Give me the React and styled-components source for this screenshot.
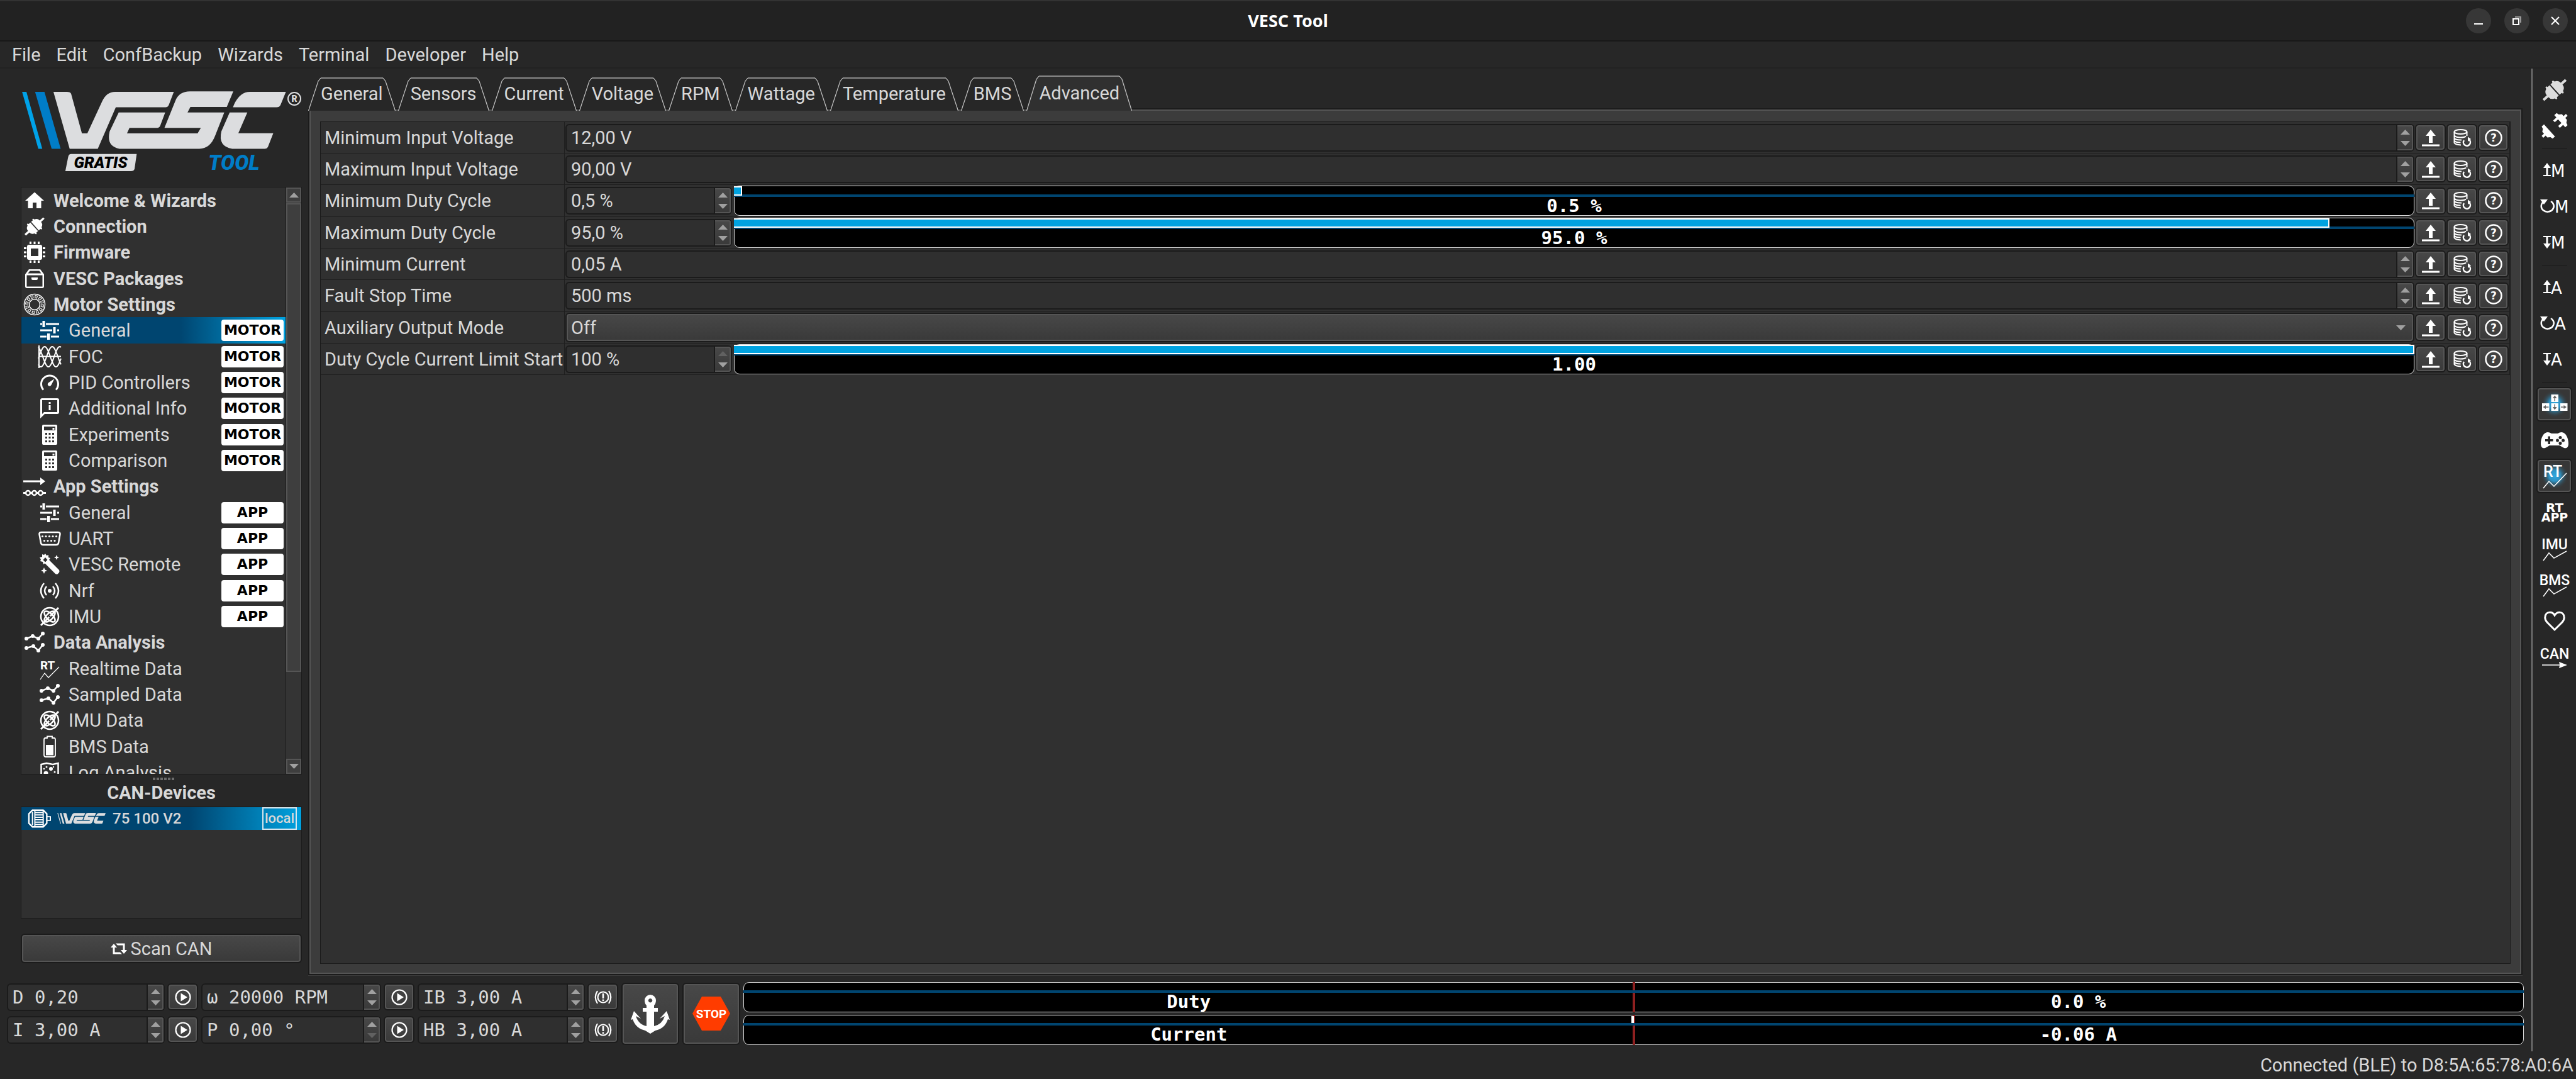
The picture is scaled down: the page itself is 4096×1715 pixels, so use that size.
import React from "react";
import styled, { createGlobalStyle, css } from "styled-components";
import { MdHome } from "react-icons/md";

const c = {
  window: "#272727",
  title: "#222222",
  base: "#303030",
  panel: "#3c3c3c",
  dark: "#1b1b1b",
  light: "#555555",
  text: "#d8d8d8",
  accent: "#00a2e0",
  accentDark: "#004570",
};

const sans = `Roboto, "Liberation Sans", sans-serif`;
const mono = `"DejaVu Sans Mono", "Liberation Mono", monospace`;
const wide = `"DejaVu Sans", "Liberation Sans", sans-serif`;

const Global = createGlobalStyle`
  *, *::before, *::after { box-sizing: border-box; }
  body { margin: 0; background: ${c.window}; overflow: hidden; }
  button, input, select { font: inherit; color: inherit; margin: 0; padding: 0; }
  svg { display: block; flex: none; overflow: visible; }
`;

/* ---------- frame ---------- */

const Window = styled.div`
  display: flex;
  flex-direction: column;
  height: 100vh;
  background: ${c.window};
  color: ${c.text};
  font: 400 29px/34px ${sans};
`;

const TitleBar = styled.header`
  display: grid;
  grid-template-columns: 1fr auto 1fr;
  align-items: center;
  height: 66px;
  flex: none;
  padding: 0 13px;
  background: ${c.title};
  border-top: 2px solid #333;
  border-bottom: 2px solid #181818;
`;

const Title = styled.h1`
  grid-column: 2;
  margin: 0;
  color: #fff;
  font: 700 27px/34px "Noto Sans", "Open Sans", sans-serif;
`;

const WindowButtons = styled.div`
  display: flex;
  justify-content: flex-end;
  gap: 21px;
`;

const RoundButton = styled.button`
  display: grid;
  place-items: center;
  width: 40px;
  height: 40px;
  border: 0;
  border-radius: 50%;
  background: #373737;
`;

const MenuBar = styled.nav`
  display: flex;
  align-items: center;
  height: 43px;
  flex: none;
  padding-left: 6px;
  border-bottom: 2px solid #222;
`;

const MenuButton = styled.button`
  border: 0;
  padding: 0 12px 0 13px;
  background: none;
`;

const Body = styled.div`
  display: flex;
  flex: 1;
  min-height: 0;
`;

const Work = styled.div`
  display: flex;
  flex-direction: column;
  flex: 1;
  min-width: 0;
`;

const Upper = styled.div`
  display: flex;
  flex: 1;
  min-height: 0;
`;

const StatusBar = styled.footer`
  display: flex;
  align-items: center;
  justify-content: flex-end;
  height: 44px;
  flex: none;
  padding-right: 4px;
`;

/* ---------- shared controls ---------- */

const raised = css`
  border: 2px solid ${c.dark};
  border-radius: 6px;
  background: linear-gradient(#484848, #393939);
  box-shadow: inset 0 0 0 2px ${c.light};
`;

const ToolButton = styled.button`
  ${raised}
  display: grid;
  place-items: center;
  flex: none;
  width: ${(p) => p.$w || 49}px;
  height: ${(p) => p.$h || 43}px;
  color: #fff;
`;

const FieldBox = styled.div`
  display: flex;
  flex: ${(p) => (p.$w ? "none" : 1)};
  width: ${(p) => (p.$w ? p.$w + "px" : "auto")};
  min-width: 0;
  height: 44px;
  border: 2px solid ${c.dark};
  border-radius: 6px;
  background: #2f2f2f;
  font-family: ${(p) => (p.$mono ? mono : "inherit")};
`;

const TextInput = styled.input`
  flex: 1;
  min-width: 0;
  padding: 0 7px;
  border: 0;
  background: none;
  outline: 0;
`;

const Spin = styled.div`
  display: flex;
  flex-direction: column;
  width: 27px;
  border-left: 2px solid ${c.dark};
  border-radius: 0 4px 4px 0;
  background: linear-gradient(#484848, #393939);
  box-shadow: inset -2px 0 ${c.light}, inset 0 2px ${c.light}, inset 0 -2px ${c.light};
`;

const SpinButton = styled.button`
  display: grid;
  place-items: ${(p) => (p.$up ? "end" : "start")} center;
  flex: 1;
  border: 0;
  padding: 5px 0;
  background: none;
  color: ${(p) => (p.$off ? "#616161" : "#a0a0a0")};
`;

const Up = () => (
  <svg width="15" height="8" viewBox="0 0 15 8"><path d="M0 8 7.500 0 15 8z" fill="currentColor" /></svg>
);
const Down = () => (
  <svg width="15" height="8" viewBox="0 0 15 8"><path d="M0 0 7.500 8 15 0z" fill="currentColor" /></svg>
);

function NumberField({ id, label, value, width, mono: isMono, offUp, offDown }) {
  return (
    <FieldBox $w={width} $mono={isMono}>
      <TextInput id={id} aria-label={label} defaultValue={value} />
      <Spin>
        <SpinButton $up $off={offUp} aria-label="Increase"><Up /></SpinButton>
        <SpinButton $off={offDown} aria-label="Decrease"><Down /></SpinButton>
      </Spin>
    </FieldBox>
  );
}

/* ---------- level bars ---------- */

const Bar = styled.div`
  position: relative;
  display: flex;
  flex: 1;
  height: 48px;
  padding-top: 15px;
  border: 1px solid #d8d8d8;
  border-radius: 9px;
  background: #000;
  color: #fff;
  font: 700 29px/32px ${mono};
  text-align: center;
`;

const BarLine = styled.span`
  position: absolute;
  inset: ${(p) => p.$top || 13}px -1px auto;
  height: 4px;
  background: ${c.accentDark};
`;

const BarFill = styled.span`
  position: absolute;
  top: 0;
  left: -1px;
  height: 15px;
  border: 2px solid #fff;
  border-left: 0;
  background: ${c.accent};
`;

const BarZero = styled.span`
  position: absolute;
  inset: -1px auto -1px 50%;
  width: 4px;
  margin-left: -2px;
  background: #8e2020;
`;

const BarTick = styled.span`
  position: absolute;
  inset: 1px 50% auto auto;
  width: 4px;
  height: 12px;
  background: #fff;
`;

const BarText = styled.span`
  position: relative;
  flex: 1;
`;

/* ---------- logo ---------- */

const white = "#dcdddf";

const LogoLetters = () => (
  <>
    <path d="M149 454H186Q196 454 198 464L228 660H243L284 502Q296 454 320 454H483L469 520Q466 531 460 531H322L272 736H194z" />
    <path d="M330 556H459L445 623Q442 633 434 633H360L353 660H549L558 633H457L487 500Q497 452 528 452H648L630 529H529L521 556H623L598 670Q584 736 554 736H332Q295 725 305 650z" />
    <path d="M694 454H794L779 520Q776 531 768 531H647L652 510Q668 454 694 454zM638 556H687L662 659H759L744 728Q742 736 736 736H645Q605 725 615 650z" />
  </>
);

const Logo = () => (
  <svg width="447" height="144" viewBox="0 0 447 144" role="img" aria-label="VESC Tool">
    <g transform="scale(.573 .321) translate(-60 -445)">
      <path fill="#00a2e8" d="M62 454H74L118 736H107z" />
      <path fill="#007dc8" d="M98 454H124L169 736H144z" />
      <g fill={white}><LogoLetters /></g>
      <path fill={white} d="M198 762H380L374 836Q372 847 364 847H182L190 775Q192 762 198 762z" />
    </g>
    <circle cx="434" cy="14" r="10" fill="none" stroke={white} strokeWidth="2" />
    <text x="434" y="19" textAnchor="middle" fill={white} fontFamily="Roboto" fontWeight="900" fontSize="14">R</text>
    <text x="126" y="124" textAnchor="middle" fill="#000" fontFamily="Roboto" fontWeight="900" fontStyle="italic" fontSize="25">GRATIS</text>
    <text x="338" y="127" textAnchor="middle" fill="#007dc8" fontFamily="Roboto" fontWeight="900" fontStyle="italic" fontSize="33">TOOL</text>
  </svg>
);

const LogoSmall = () => (
  <svg width="78" height="18" viewBox="0 0 78 18" aria-label="VESC">
    <g transform="scale(.105 .06) translate(-60 -450)" fill={white}>
      <path d="M62 454H74L118 736H107zM98 454H124L169 736H144z" />
      <LogoLetters />
    </g>
  </svg>
);

/* ---------- icons ---------- */

const Svg = ({ s = 36, w, h, vb, children }) => (
  <svg width={w || s} height={h || s} viewBox={vb || "0 0 36 36"} fill="#fff" stroke="none">{children}</svg>
);
const L = (p) => <path fill="none" stroke="#fff" strokeWidth="2.500" {...p} />;

const Home = () => <MdHome size={36} color="#fff" />;

const PlugShape = ({ fill = "#fff" }) => (
  <g transform="rotate(-42 18 18)" fill={fill}>
    <path d="M-6 16H3Q3 10 9 8L10 5H12L13 7H17V29H13L12 31H10L9 28Q3 26 3 20H-6z" />
    <path d="M42 16H33Q33 10 27 8L26 5H24L23 7H19V29H23L24 31H26L27 28Q33 26 33 20H42z" />
  </g>
);
const Plug = () => <Svg><g transform="translate(3 3) scale(.83)"><PlugShape /></g></Svg>;

const Chip = () => (
  <Svg>
    <path fillRule="evenodd" d="M9 6H27Q30 6 30 9V27Q30 30 27 30H9Q6 30 6 27V9Q6 6 9 6zM12 12V24H24V12z" />
    <path d="M10 1h3v4h-3zM16.500 1h3v4h-3zM23 1h3v4h-3zM10 31h3v4h-3zM16.500 31h3v4h-3zM23 31h3v4h-3zM1 10h4v3H1zM1 16.500h4v3H1zM1 23h4v3H1zM31 10h4v3h-4zM31 16.500h4v3h-4zM31 23h4v3h-4z" />
  </Svg>
);

const Box = () => (
  <Svg>
    <path fillRule="evenodd" d="M9 3H27L33 11V30Q33 33 30 33H6Q3 33 3 30V11zM10.500 5.500 7.500 9.500H28.500L25.500 5.500zM5.500 12.500V30.500H30.500V12.500z" />
    <path d="M13 16H23V18Q23 20 21 20H15Q13 20 13 18z" />
  </Svg>
);

const Stator = () => (
  <Svg>
    <circle cx="18" cy="18" r="16.500" fill="none" stroke="#fff" strokeWidth="1.500" />
    <circle cx="18" cy="18" r="12.500" fill="none" stroke="#fff" strokeWidth="5" strokeDasharray="4.200 2.345" />
    <circle cx="18" cy="18" r="12.500" fill="none" stroke="#303030" strokeWidth="3" strokeDasharray="2 4.545" strokeDashoffset="-1.100" />
    <circle cx="18" cy="18" r="8.500" fill="none" stroke="#fff" strokeWidth="1.500" />
  </Svg>
);

const Sliders = () => (
  <Svg>
    <path d="M3 6.500h3v3H3zM12 6.500h21v3H12zM6.500 3h4v10h-4zM3 16.500h19v3H3zM30 16.500h3v3h-3zM23.500 13h4v10h-4zM3 26.500h10v3H3zM20 26.500h13v3H20zM14 23h4.500v10H14z" />
  </Svg>
);

const sine = (phase) =>
  Array.from({ length: 37 }, (_, x) => `${x ? "L" : "M"}${x} ${(18 - 16 * Math.cos((2 * Math.PI * (x - phase)) / 36)).toFixed(2)}`).join("");

const Foc = () => (
  <Svg>
    <L strokeWidth="2" d="M1 0V36M0 17.500H36" />
    {[10, 22, 34].map((p) => <L key={p} strokeWidth="2" d={sine(p)} />)}
  </Svg>
);

const Gauge = () => (
  <Svg>
    <L strokeWidth="3" d="M8 29.500A13.500 13.500 0 1 1 28 29.500" />
    <path d="M25.500 12 20.500 22A3 3 0 1 1 16.500 18z" />
  </Svg>
);

const InfoBubble = () => (
  <Svg>
    <path fillRule="evenodd" d="M6 2H30Q33 2 33 5V24Q33 27 30 27H10L3 34V5Q3 2 6 2zM6 5V27L9 24H30V5z" />
    <path d="M16.500 8h3v3h-3zM16.500 13h3v8h-3z" />
  </Svg>
);

const Calculator = () => (
  <Svg>
    <path fillRule="evenodd" d="M8 2H28Q30 2 30 4V32Q30 34 28 34H8Q6 34 6 32V4Q6 2 8 2zM9 5V11H27V5zM11 15v3h3v-3zM16.500 15v3h3v-3zM22 15v3h3v-3zM11 21v3h3v-3zM16.500 21v3h3v-3zM22 21v3h3v-3zM11 27v3h3v-3zM16.500 27v3h3v-3zM22 27v3h3v-3z" />
    <path d="M22.500 7h3v3h-3z" />
  </Svg>
);

const AppFlow = () => (
  <Svg>
    <path d="M0 8.500H27V4L35 10 27 16V11.500H0z" />
    <L strokeWidth="3" d="M0 28.500H4M11 28.500H14M21 28.500H24M31 28.500H36" />
    {[7.5, 17.5, 27.5].map((x) => <circle key={x} cx={x} cy="28.500" r="3.500" fill="none" stroke="#fff" strokeWidth="2.500" />)}
  </Svg>
);

const Uart = () => (
  <Svg>
    <L d="M5 8H31Q35 8 34.500 11L32 25Q31.500 28 28 28H8Q4.500 28 4 25L1.500 11Q1 8 5 8z" />
    {[6.5, 12, 17.5, 23, 28.5].map((x) => <circle key={x} cx={x} cy="14.500" r="1.600" />)}
    {[9.5, 15, 20.5, 26].map((x) => <circle key={x} cx={x} cy="21.500" r="1.600" />)}
  </Svg>
);

const Wrench = () => (
  <Svg>
    <path d="M13 13 16 10 33 27Q34 29 33 31L30.500 33.500Q28.500 34 27 33L10 16z" />
    <path fillRule="evenodd" d="M11 1l2 3 3-1 0 4 3 1-2 3 2 3-4 0-1 4-3-2-3 2-1-4-4-1 1-3-2-3 4-1 0-4 3 1zM11 7 7.500 11 11 14.500 14.500 11z" />
    <path d="M29 3l1.200 2.800L33 7l-2.800 1.200L29 11l-1.200-2.800L25 7l2.800-1.200zM9 23l1.500 3.500L14 28l-3.500 1.500L9 33l-1.500-3.500L4 28l3.500-1.500z" />
  </Svg>
);

const Radio = () => (
  <Svg>
    <circle cx="18" cy="18" r="3" />
    <L d="M9 6Q-1 18 9 30M13 11Q7 18 13 25M27 6Q37 18 27 30M23 11Q29 18 23 25" />
  </Svg>
);

const Imu = () => (
  <Svg>
    <circle cx="18" cy="18" r="14" fill="none" stroke="#fff" strokeWidth="2.500" />
    <L strokeWidth="3" d="M4 32 32 4" />
    <g fill="none" stroke="#fff" strokeWidth="2.500">
      <ellipse cx="18" cy="18" rx="11" ry="5" transform="rotate(45 18 18)" />
      <ellipse cx="18" cy="18" rx="11" ry="5" transform="rotate(-45 18 18)" />
    </g>
    <circle cx="18" cy="18" r="1.500" fill="#303030" />
  </Svg>
);

const Lines = () => (
  <Svg>
    <L d="M5 12 15 8 24 12 31 4M5 27 16 24 24 31 31 22" />
    {[[5, 12], [15, 8], [24, 12], [31, 4], [5, 27], [16, 24], [24, 31], [31, 22]].map(([x, y]) => (
      <circle key={x + "-" + y} cx={x} cy={y} r="3" />
    ))}
  </Svg>
);

const RtSmall = () => (
  <Svg>
    <text x="3" y="19" fontFamily="Roboto" fontSize="19" fontWeight="700">RT</text>
    <L strokeWidth="1.200" d="M3 35 10 25 16 32 33 15" />
  </Svg>
);

const Battery = () => (
  <Svg>
    <L strokeWidth="1.800" d="M11 4H14V1.500H22V4H25Q27 4 27 7V31Q27 34 24 34H12Q9 34 9 31V7Q9 4 11 4z" />
    <path d="M12 15H24V31.500H12z" />
  </Svg>
);

const MapIcon = () => (
  <Svg>
    <L d="M4.500 5 13 3 23 5 31.500 3V32L23 34 13 31 4.500 33z" />
    <circle cx="20" cy="12" r="3" /><circle cx="12" cy="19" r="3.500" /><circle cx="13" cy="9" r="1.500" />
    <circle cx="26" cy="17" r="1.500" /><circle cx="24" cy="9" r="1.200" /><circle cx="9" cy="12" r="1.300" />
  </Svg>
);

const MotorIcon = () => (
  <Svg w={36} h={32} vb="1 1 38 32">
    <L d="M8 3H26L32 9V25L26 31H8L2 25V9z" />
    <L strokeWidth="2" d="M32 14H38V20H32" />
    <path d="M7 6h2v22H7zM11 4h2v26h-2zM13 6h12v2H13zM13 10h12v2H13zM13 14h12v2H13zM13 18h12v2H13zM13 22h12v2H13zM13 26h12v2H13zM25 4h2v26h-2z" />
  </Svg>
);

const Scan = () => (
  <Svg w={26} h={20} vb="0 0 26 20">
    <path d="M0 8 5 2 10 8H6.500V15.500H15L18 18.500H3.500V8zM26 12 21 18 16 12H19.500V4.500H11L8 1.500H22.500V12z" />
  </Svg>
);

const Upload = () => (
  <Svg w={28} h={28} vb="0 0 28 28"><path d="M14 1 22 11H17V22H11V11H6zM0 24.500H28V27.500H0z" /></Svg>
);

const Database = () => (
  <Svg w={28} h={28} vb="0 0 28 28">
    <g fill="none" stroke="#fff" strokeWidth="2">
      <ellipse cx="11.500" cy="4.500" rx="10" ry="3.500" />
      <path d="M1.500 4.500V22Q3 25 12 25.500M21.500 4.500V11M1.500 10Q3 13.500 11.500 13.500 18 13.500 20 11.500M1.500 14.500Q3 17.500 11.500 17.500L13 17.400M1.500 18.500Q3 21.500 11.500 21.500" />
      <path strokeWidth="2.500" d="M17 18A5.500 5.500 0 1 0 25 17" />
    </g>
    <path d="M23 12.500 28 16 23 20z" />
  </Svg>
);

const Help = () => (
  <Svg w={28} h={28} vb="0 0 28 28">
    <circle cx="14" cy="14" r="12.500" fill="none" stroke="#fff" strokeWidth="2.500" />
    <text x="14" y="20" textAnchor="middle" fontFamily={wide} fontSize="17" fontWeight="700">?</text>
  </Svg>
);

const Play = () => (
  <Svg w={26} h={26} vb="0 0 26 26">
    <circle cx="13" cy="13" r="11.500" fill="none" stroke="#fff" strokeWidth="2.200" />
    <path d="M9.500 6.500 20 13 9.500 19.500z" />
  </Svg>
);

const Brake = () => (
  <Svg w={28} h={24} vb="0 0 28 24">
    <circle cx="14" cy="12" r="8.500" fill="none" stroke="#fff" strokeWidth="2.200" />
    <L strokeWidth="2.200" d="M5 2Q-1.500 12 5 22M23 2Q29.500 12 23 22" />
    <path d="M12.700 6h2.600v8h-2.600zM12.700 15.500h2.600v2.500h-2.600z" />
  </Svg>
);

const Anchor = () => (
  <Svg w={62} h={62} vb="0 0 62 62">
    <path fillRule="evenodd" d="M31 1A9 9 0 0 1 40 10Q40 15 37 18V22H43V28H37V51Q50 48 54 35L46 39 57 27 62 41 59 40Q54 55 39 58L31 63 23 58Q8 55 3 40L0 41 5 27 16 39 8 35Q12 48 25 51V28H19V22H25V18Q22 15 22 10A9 9 0 0 1 31 1zM31 7A3.200 3.200 0 1 0 31.100 7z" />
  </Svg>
);

const StopIcon = () => (
  <Svg w={60} h={54} vb="0 0 60 54">
    <path fill="#ff3c00" stroke="none" d="M15 0H45L60 27 45 54H15L0 27z" />
    <text x="30" y="34" textAnchor="middle" fontFamily="Roboto" fontSize="19" fontWeight="700">STOP</text>
  </Svg>
);

/* toolbar drawings */
const Connect = () => <Svg s={38} vb="-1 -1 38 38"><PlugShape fill="#dcdcdc" /></Svg>;
const Disconnect = () => (
  <Svg s={38} vb="-1 -1 38 38">
    <g transform="rotate(-42 18 18)">
      <path d="M-8 16H-3V12L1 9 2 5H7V31H2L1 27 -3 24V20H-8z" />
      <path d="M44 16H39V12L35 9 34 5H29V10H22V14H29V22H22V26H29V31H34L35 27 39 24V20H44z" />
    </g>
  </Svg>
);
const Letter = ({ kind, ch }) => (
  <Svg w={46} h={30} vb="0 0 46 30">
    {kind === "up" && <path d="M11 3 17 11H12.500V22H17V24H5V22H9.500V11H5z" />}
    {kind === "down" && <path d="M5 5H17V7H12.500V17H17L11 25 5 17H9.500V7H5z" />}
    {kind === "reload" && (
      <>
        <path fill="none" stroke="#fff" strokeWidth="2.500" d="M5 8A10 9 0 1 0 17 7" />
        <path d="M0 4 12 4 6 12z" />
      </>
    )}
    <text x={kind === "reload" ? 23 : 17} y="25" fontFamily={wide} fontSize="26">{ch}</text>
  </Svg>
);
const Glow = ({ children, id }) => (
  <Svg w={48} h={46} vb="0 0 48 46">
    <defs>
      <radialGradient id={id}>
        <stop offset="0" stopColor="#2fa8e0" />
        <stop offset=".4" stopColor="#2f93c4" />
        <stop offset="1" stopColor="#373737" stopOpacity="0" />
      </radialGradient>
    </defs>
    <circle cx="24" cy="22" r="22" fill={`url(#${id})`} />
    {children}
  </Svg>
);
const Keys = () => (
  <Glow id="glow-keys">
    <path d="M18.500 7h11.500v12H18.500zM4 21h11.500v12H4zM18.500 21h11.500v12H18.500zM33 21h11.500v12H33z" />
    <path fill="#666" d="M24.200 8.500 27.500 13H25V17.500H23.500V13H21zM24.200 31.500 27.500 27H25V22.500H23.500V27H21zM5.500 27 10 24V26.200H14.500V27.800H10V30zM43 27 38.500 24V26.200H34V27.800H38.500V30z" />
  </Glow>
);
const Rt = () => (
  <Glow id="glow-rt">
    <text x="6" y="24" fontFamily="Roboto" fontSize="25" fontWeight="500">RT</text>
    <L strokeWidth="1.500" d="M6 42 15 31 23 39 43 18" />
  </Glow>
);
const Gamepad = () => (
  <Svg w={44} h={26} vb="0 0 44 26">
    <path fillRule="evenodd" d="M11 0Q14 0 17 2H27Q30 0 33 0C40 0 44 10 44 18C44 25 40 26 37 25Q33 23 30 21H14Q11 23 7 25C4 26 0 25 0 18C0 10 4 0 11 0zM11.500 6.500V11H7V14.500H11.500V19H15V14.500H19.500V11H15V6.500z" />
    <g fill="#272727"><circle cx="31" cy="8.500" r="2.500" /><circle cx="31" cy="17.500" r="2.500" /><circle cx="26.500" cy="13" r="2.500" /><circle cx="35.500" cy="13" r="2.500" /></g>
  </Svg>
);
const RtApp = () => (
  <Svg w={48} h={32} vb="0 0 48 32">
    <g fontFamily={wide} fontWeight="700" textAnchor="middle">
      <text x="24" y="15" fontSize="20">RT</text>
      <text x="24" y="30" fontSize="19">APP</text>
    </g>
  </Svg>
);
const Graph = ({ ch }) => (
  <Svg w={48} h={42} vb="0 0 48 42">
    <text x="24" y="22" textAnchor="middle" fontFamily="Roboto" fontSize="23" fontWeight="500">{ch}</text>
    <L strokeWidth="1.500" d="M6 40 15 28 23 36 43 25" />
  </Svg>
);
const Heart = () => (
  <Svg w={34} h={32} vb="0 0 34 32">
    <L strokeWidth="3" d="M17 30 5 18Q1 13 2 9C3 1 13 0 17 7C21 0 31 1 32 9Q33 13 29 18z" />
  </Svg>
);
const Can = () => (
  <Svg w={48} h={38} vb="0 0 48 38">
    <text x="24" y="22" textAnchor="middle" fontFamily="Roboto" fontSize="23" fontWeight="500">CAN</text>
    <path d="M4 31.300H32L31 27 44 32 31 37 32 32.700H4z" />
  </Svg>
);

/* ---------- left column ---------- */

const Side = styled.aside`
  display: flex;
  flex-direction: column;
  width: 490px;
  flex: none;
  padding: 34px 10px 19px 33px;
`;

const LogoArea = styled.div`
  height: 154px;
  flex: none;
  padding-left: 1px;
`;

const NavBox = styled.div`
  display: flex;
  flex: 1;
  min-height: 0;
  overflow: hidden;
  border: 1px solid ${c.dark};
  background: ${c.base};
`;

const NavList = styled.ul`
  flex: 1;
  margin: 0;
  padding: 0;
  list-style: none;
`;

const NavItem = styled.li`
  height: 41px;
  &:nth-child(3n) { height: 42px; }
`;

const NavLink = styled.a`
  display: flex;
  align-items: center;
  gap: 12px;
  height: 100%;
  padding: 0 3px 0 ${(p) => (p.$head ? 3 : 27)}px;
  color: inherit;
  text-decoration: none;
  font-weight: ${(p) => (p.$head ? 700 : 400)};
  background: ${(p) => (p.$on ? `linear-gradient(90deg, ${c.accentDark} 60%, ${c.accent})` : "none")};
`;

const NavText = styled.span`
  flex: 1;
  white-space: nowrap;
`;

const Badge = styled.span`
  width: 99px;
  height: 34px;
  border-radius: 4px;
  background: #fff;
  color: #000;
  font: 700 22px/34px ${wide};
  text-align: center;
`;

const Scroll = styled.div`
  display: flex;
  flex-direction: column;
  width: 25px;
  border-left: 1px solid ${c.dark};
  background: #343434;
`;

const ScrollButton = styled.button`
  display: grid;
  place-items: center;
  height: 24px;
  border: 2px solid ${c.light};
  background: #3e3e3e;
  color: #a0a0a0;
`;

const Thumb = styled.div`
  flex: ${(p) => p.$share};
  margin-top: 1px;
  border: ${(p) => (p.$empty ? "0" : `2px solid ${c.light}`)};
  background: ${(p) => (p.$empty ? "none" : "#3e3e3e")};
`;

const Grip = styled.div`
  display: flex;
  justify-content: center;
  align-items: center;
  gap: 2px;
  height: 14px;
  margin-left: 6px;
`;

const Dot = styled.i`
  width: 4px;
  height: 4px;
  background: #6c6c6c;
`;

const SideTitle = styled.h2`
  margin: 0;
  height: 37px;
  font: 700 29px/31px ${sans};
  text-align: center;
`;

const Devices = styled.div`
  height: 178px;
  border: 1px solid ${c.dark};
  background: ${c.base};
`;

const Device = styled.div`
  display: flex;
  align-items: center;
  height: 36px;
  padding: 0 7px 0 11px;
  gap: 10px;
  background: linear-gradient(90deg, ${c.accentDark} 60%, ${c.accent});
  font: 500 24px/32px ${sans};
`;

const DeviceName = styled.span`
  flex: 1;
`;

const Local = styled.span`
  padding: 0 2px;
  border: 2px solid #d8e6ee;
  font-size: 22px;
`;

const ScanButton = styled.button`
  ${raised}
  display: flex;
  align-items: center;
  justify-content: center;
  gap: 6px;
  height: 47px;
  margin-top: 24px;
`;

const nav = [
  ["Welcome & Wizards", Home, 1], ["Connection", Plug, 1], ["Firmware", Chip, 1], ["VESC Packages", Box, 1],
  ["Motor Settings", Stator, 1], ["General", Sliders, 0, "MOTOR", true], ["FOC", Foc, 0, "MOTOR"],
  ["PID Controllers", Gauge, 0, "MOTOR"], ["Additional Info", InfoBubble, 0, "MOTOR"],
  ["Experiments", Calculator, 0, "MOTOR"], ["Comparison", Calculator, 0, "MOTOR"], ["App Settings", AppFlow, 1],
  ["General", Sliders, 0, "APP"], ["UART", Uart, 0, "APP"], ["VESC Remote", Wrench, 0, "APP"], ["Nrf", Radio, 0, "APP"],
  ["IMU", Imu, 0, "APP"], ["Data Analysis", Lines, 1], ["Realtime Data", RtSmall, 0], ["Sampled Data", Lines, 0],
  ["IMU Data", Imu, 0], ["BMS Data", Battery, 0], ["Log Analysis", MapIcon, 0],
];

function Sidebar() {
  return (
    <Side>
      <LogoArea><Logo /></LogoArea>
      <NavBox>
        <NavList>
          {nav.map(([name, Icon, head, badge, on], i) => (
            <NavItem key={i}>
              <NavLink href="#" $head={head} $on={on}>
                <Icon />
                <NavText>{name}</NavText>
                {badge && <Badge>{badge}</Badge>}
              </NavLink>
            </NavItem>
          ))}
        </NavList>
        <Scroll>
          <ScrollButton aria-label="Scroll up"><Up /></ScrollButton>
          <Thumb $share={746} />
          <Thumb $share={138} $empty />
          <ScrollButton aria-label="Scroll down"><Down /></ScrollButton>
        </Scroll>
      </NavBox>
      <Grip>{[0, 1, 2, 3, 4, 5].map((i) => <Dot key={i} />)}</Grip>
      <SideTitle>CAN-Devices</SideTitle>
      <Devices>
        <Device>
          <MotorIcon />
          <LogoSmall />
          <DeviceName>75 100 V2</DeviceName>
          <Local>local</Local>
        </Device>
      </Devices>
      <ScanButton><Scan />Scan CAN</ScanButton>
    </Side>
  );
}

/* ---------- tabs and settings ---------- */

const Main = styled.main`
  display: flex;
  flex-direction: column;
  flex: 1;
  min-width: 0;
  padding: 11px 14px 0 0;
`;

const Tabs = styled.div`
  display: flex;
  align-items: flex-end;
  gap: 4px;
  height: 56px;
  margin-bottom: -4px;
  z-index: 1;
`;

const Tab = styled.button`
  display: flex;
  height: ${(p) => (p.$on ? 56 : 53)}px;
  border: 0;
  background: none;
`;

const TabText = styled.span`
  height: 100%;
  border-top: 2px solid #8a8a8a;
  background: ${(p) => (p.$on ? c.base : c.window)};
  line-height: ${(p) => (p.$on ? 52 : 49)}px;
`;

function TabEdge({ on, right }) {
  const h = on ? 56 : 53;
  return (
    <svg width="20" height={h} viewBox={`0 0 20 ${h}`}>
      <path d={right ? `M20 ${h} 6 6 0 0V${h}z` : `M0 ${h} 14 6 20 0V${h}z`} fill={on ? c.base : c.window} />
      <path d={right ? `M19.500 ${h} 4 6 0 1` : `M.5 ${h} 16 6 20 1`} fill="none" stroke="#c4c4c4" strokeWidth="1.200" />
    </svg>
  );
}

const Pane = styled.section`
  display: flex;
  flex: 1;
  min-height: 0;
  padding: 19px 17px 16px;
  border: 2px solid ${c.dark};
  background: ${c.panel};
  box-shadow: inset 0 0 0 2px ${c.light}, 0 1px #3a3a3a;
`;

const Settings = styled.div`
  flex: 1;
  min-width: 0;
  border: 1px solid ${c.dark};
  background: ${c.base};
`;

const Row = styled.div`
  display: flex;
  align-items: center;
  height: 50px;
  border-right: 1px solid #1e1e1e;
  border-bottom: 1px solid #1e1e1e;
  &:nth-child(3n) { height: 51px; }
`;

const RowLabel = styled.label`
  align-self: stretch;
  display: flex;
  align-items: center;
  width: 388px;
  flex: none;
  padding-left: 6px;
  border-right: 1px solid #1e1e1e;
  white-space: nowrap;
`;

const RowField = styled.div`
  display: flex;
  align-items: center;
  gap: 3px;
  flex: 1;
  min-width: 0;
  padding: 0 1px;
`;

const RowButtons = styled.div`
  display: flex;
  gap: 1px;
  padding-right: 1px;
`;

const Combo = styled.div`
  ${raised}
  display: flex;
  align-items: center;
  flex: 1;
  height: 47px;
  padding-right: 12px;
  color: #a0a0a0;
`;

const Select = styled.select`
  flex: 1;
  height: 100%;
  padding: 0 7px;
  border: 0;
  outline: 0;
  appearance: none;
  background: none;
  color: ${c.text};
`;

const rows = [
  { name: "Minimum Input Voltage", value: "12,00 V" },
  { name: "Maximum Input Voltage", value: "90,00 V" },
  { name: "Minimum Duty Cycle", value: "0,5 %", bar: "0.5 %", fill: 0.5 },
  { name: "Maximum Duty Cycle", value: "95,0 %", bar: "95.0 %", fill: 95 },
  { name: "Minimum Current", value: "0,05 A" },
  { name: "Fault Stop Time", value: "500 ms" },
  { name: "Auxiliary Output Mode", options: ["Off"] },
  { name: "Duty Cycle Current Limit Start", value: "100 %", bar: "1.00", fill: 100, offUp: true },
];

function SettingRow({ row, index }) {
  const id = `setting-${index}`;
  return (
    <Row>
      <RowLabel htmlFor={id}>{row.name}</RowLabel>
      <RowField>
        {row.options ? (
          <Combo>
            <Select id={id}>{row.options.map((o) => <option key={o}>{o}</option>)}</Select>
            <Down />
          </Combo>
        ) : (
          <NumberField id={id} label={row.name} value={row.value} width={row.bar && 265} offUp={row.offUp} />
        )}
        {row.bar && (
          <Bar>
            <BarLine />
            <BarFill style={{ width: `calc(${row.fill}% + ${row.fill === 100 ? 2 : 0}px)` }} />
            <BarText>{row.bar}</BarText>
          </Bar>
        )}
      </RowField>
      <RowButtons>
        <ToolButton aria-label="Read value"><Upload /></ToolButton>
        <ToolButton aria-label="Read default value"><Database /></ToolButton>
        <ToolButton aria-label="Help"><Help /></ToolButton>
      </RowButtons>
    </Row>
  );
}

const tabs = ["General", "Sensors", "Current", "Voltage", "RPM", "Wattage", "Temperature", "BMS", "Advanced"];

function MainArea() {
  return (
    <Main>
      <Tabs role="tablist">
        {tabs.map((t) => {
          const on = t === "Advanced";
          return (
            <Tab key={t} role="tab" aria-selected={on} $on={on}>
              <TabEdge on={on} />
              <TabText $on={on}>{t}</TabText>
              <TabEdge on={on} right />
            </Tab>
          );
        })}
      </Tabs>
      <Pane>
        <Settings>{rows.map((r, i) => <SettingRow key={r.name} row={r} index={i} />)}</Settings>
      </Pane>
    </Main>
  );
}

/* ---------- bottom controls ---------- */

const Bottom = styled.section`
  display: flex;
  align-items: center;
  gap: 5px;
  flex: none;
  padding: 11px 12px 10px 11px;
`;

const Pair = styled.div`
  display: flex;
  flex-direction: column;
  gap: 8px;
`;

const ControlRow = styled.div`
  display: flex;
  gap: 4px;
`;

const Bars = styled.div`
  display: flex;
  flex-direction: column;
  flex: 1;
  gap: 4px;
`;

const BottomBar = styled(Bar)`
  flex: none;
  padding-top: 14px;
`;

const controls = [
  { w: 251, items: [["Duty", "D 0,20"], ["Current", "I 3,00 A"]], Icon: Play },
  { w: 286, items: [["Speed", "ω 20000 RPM"], ["Position", "P 0,00 °", true]], Icon: Play },
  { w: 266, items: [["Brake current", "IB 3,00 A"], ["Handbrake current", "HB 3,00 A"]], Icon: Brake },
];

function BottomControls() {
  return (
    <Bottom>
      {controls.map(({ w, items, Icon }) => (
        <Pair key={w}>
          {items.map(([label, value, off]) => (
            <ControlRow key={label}>
              <NumberField mono label={label} value={value} width={w} offDown={off} />
              <ToolButton aria-label={`Apply ${label}`}><Icon /></ToolButton>
            </ControlRow>
          ))}
        </Pair>
      ))}
      <ToolButton $w={92} $h={99} aria-label="Full brake"><Anchor /></ToolButton>
      <ToolButton $w={92} $h={99} aria-label="Stop"><StopIcon /></ToolButton>
      <Bars>
        <BottomBar>
          <BarZero />
          <BarLine $top={12} />
          <BarText>Duty</BarText>
          <BarText>0.0 %</BarText>
        </BottomBar>
        <BottomBar>
          <BarZero />
          <BarTick />
          <BarLine $top={12} />
          <BarText>Current</BarText>
          <BarText>-0.06 A</BarText>
        </BottomBar>
      </Bars>
    </Bottom>
  );
}

/* ---------- right toolbar ---------- */

const Toolbar = styled.aside`
  display: flex;
  flex-direction: column;
  align-items: center;
  width: 71px;
  flex: none;
  padding-top: 6px;
  border-left: 2px solid #777;
`;

const Group = styled.div`
  display: flex;
  flex-direction: column;
`;

const Separator = styled.hr`
  width: 40px;
  height: 2px;
  margin: 6px 0;
  border: 0;
  background: #202020;
`;

const BarButton = styled.button`
  display: grid;
  place-items: center;
  width: 57px;
  height: 55px;
  margin-bottom: 2px;
  border: 0;
  background: none;
  &:nth-child(3n) { margin-bottom: 3px; }
  ${(p) => p.$on && css`
    border: 2px solid ${c.dark};
    border-radius: 6px;
    background: #373737;
    box-shadow: inset 0 0 0 2px ${c.light};
  `}
`;

const groups = [
  [["Connect", <Connect />], ["Disconnect", <Disconnect />]],
  [["Read motor configuration", <Letter kind="up" ch="M" />], ["Read default motor configuration", <Letter kind="reload" ch="M" />], ["Write motor configuration", <Letter kind="down" ch="M" />]],
  [["Read app configuration", <Letter kind="up" ch="A" />], ["Read default app configuration", <Letter kind="reload" ch="A" />], ["Write app configuration", <Letter kind="down" ch="A" />]],
  [["Keyboard control", <Keys />, true], ["Gamepad control", <Gamepad />], ["Stream realtime data", <Rt />, true], ["Stream app data", <RtApp />],
    ["Stream IMU data", <Graph ch="IMU" />], ["Stream BMS data", <Graph ch="BMS" />], ["Send alive", <Heart />], ["CAN forward", <Can />]],
];

function RightToolbar() {
  return (
    <Toolbar>
      {groups.map((g, i) => (
        <React.Fragment key={i}>
          {i > 0 && <Separator />}
          <Group>
            {g.map(([label, icon, on]) => <BarButton key={label} aria-label={label} $on={on}>{icon}</BarButton>)}
          </Group>
        </React.Fragment>
      ))}
    </Toolbar>
  );
}

export default function App() {
  return (
    <Window>
      <Global />
      <TitleBar>
        <Title>VESC Tool</Title>
        <WindowButtons>
          <RoundButton aria-label="Minimize"><Svg s={20} vb="0 0 20 20"><path d="M3 14h14v2H3z" /></Svg></RoundButton>
          <RoundButton aria-label="Restore">
            <Svg s={20} vb="0 0 20 20"><L strokeWidth="2" d="M4 7H13V16H4z" /><L strokeWidth="2" stroke="#999" d="M7 4H16V13" /></Svg>
          </RoundButton>
          <RoundButton aria-label="Close"><Svg s={20} vb="0 0 20 20"><L strokeWidth="2" d="M4 4 16 16M16 4 4 16" /></Svg></RoundButton>
        </WindowButtons>
      </TitleBar>
      <MenuBar>
        {["File", "Edit", "ConfBackup", "Wizards", "Terminal", "Developer", "Help"].map((m) => <MenuButton key={m}>{m}</MenuButton>)}
      </MenuBar>
      <Body>
        <Work>
          <Upper>
            <Sidebar />
            <MainArea />
          </Upper>
          <BottomControls />
        </Work>
        <RightToolbar />
      </Body>
      <StatusBar>Connected (BLE) to D8:5A:65:78:A0:6A</StatusBar>
    </Window>
  );
}
